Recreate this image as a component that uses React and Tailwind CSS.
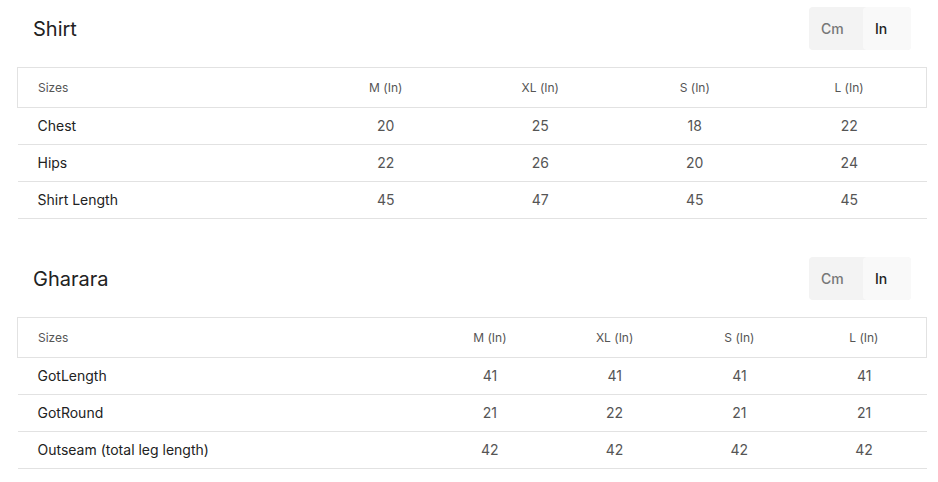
import { useState } from "react";

const charts = [
    {
        title: "Shirt",
        firstCol: "w-[291px]",
        sizes: ["M", "XL", "S", "L"],
        rows: [
            ["Chest", 20, 25, 18, 22],
            ["Hips", 22, 26, 20, 24],
            ["Shirt Length", 45, 47, 45, 45],
        ],
    },
    {
        title: "Gharara",
        firstCol: "w-[410px]",
        sizes: ["M", "XL", "S", "L"],
        rows: [
            ["GotLength", 41, 41, 41, 41],
            ["GotRound", 21, 22, 21, 21],
            ["Outseam (total leg length)", 42, 42, 42, 42],
        ],
    },
];

function UnitToggle() {
    const [unit, setUnit] = useState("In");
    return (
        <div className="flex h-[43px] rounded bg-[#f3f3f3] text-sm font-medium">
            <button
                onClick={() => setUnit("Cm")}
                className={`w-[54px] pl-3 text-left rounded ${unit === "Cm" ? "bg-[#f9f9f9] text-[#222]" : "text-[#777]"}`}
            >
                Cm
            </button>
            <button
                onClick={() => setUnit("In")}
                className={`w-[48px] pl-3 text-left rounded ${unit === "In" ? "bg-[#f9f9f9] text-[#222]" : "text-[#777]"}`}
            >
                In
            </button>
        </div>
    );
}

function SizeChart({ chart }) {
    return (
        <section>
            <div className="flex items-center justify-between px-4">
                <h2 className="text-xl text-[#222]">{chart.title}</h2>
                <UnitToggle />
            </div>

            <table className="mt-[17px] w-full border-collapse table-fixed">
                <thead>
                    <tr className="h-10 border border-[#e2e2e2] text-xs text-[#555]">
                        <th className={`${chart.firstCol} pl-5 text-left font-normal`}>
                            Sizes
                        </th>
                        {chart.sizes.map((s) => (
                            <th key={s} className="font-normal text-center">
                                {s} (In)
                            </th>
                        ))}
                    </tr>
                </thead>
                <tbody>
                    {chart.rows.map(([label, ...vals]) => (
                        <tr
                            key={label}
                            className="h-[37px] border-b border-[#e2e2e2] text-sm"
                        >
                            <td className="pl-5 text-[#222]">{label}</td>
                            {vals.map((v, i) => (
                                <td key={i} className="text-center text-[#555]">
                                    {v}
                                </td>
                            ))}
                        </tr>
                    ))}
                </tbody>
            </table>
        </section>
    );
}

export default function App() {
    return (
        <main className="bg-white min-h-screen pt-[7px] pl-[17px] pr-[11px] font-['Inter',sans-serif]">
            <div className="flex flex-col gap-[38px]">
                {charts.map((c) => (
                    <SizeChart key={c.title} chart={c} />
                ))}
            </div>
        </main>
    );
}
